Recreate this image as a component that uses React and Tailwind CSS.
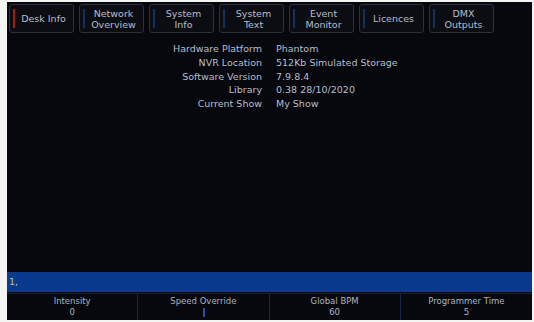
import React from 'react';

const tabs = [
  { label: ['Desk Info'], active: true },
  { label: ['Network', 'Overview'] },
  { label: ['System', 'Info'] },
  { label: ['System', 'Text'] },
  { label: ['Event', 'Monitor'] },
  { label: ['Licences'] },
  { label: ['DMX', 'Outputs'] },
];

const info = [
  ['Hardware Platform', 'Phantom'],
  ['NVR Location', '512Kb Simulated Storage'],
  ['Software Version', '7.9.8.4'],
  ['Library', '0.38 28/10/2020'],
  ['Current Show', 'My Show'],
];

const wheels = [
  { name: 'Intensity', value: '0' },
  { name: 'Speed Override', value: '', bar: true },
  { name: 'Global BPM', value: '60' },
  { name: 'Programmer Time', value: '5' },
];

const Tab = ({ label, active }) => (
  <div className="relative w-[65px] h-[29px] rounded-[3px] border border-[#2e3039] bg-[#0c0c13] flex items-center justify-center">
    <span className={`absolute left-[3px] top-[4px] bottom-[4px] w-[2px] ${active ? 'bg-[#b3161a]' : 'bg-[#13305f]'}`} />
    <div className="text-center text-[9.5px] leading-[11px] text-[#b3bfcb] pl-[4px]">
      {label.map((l) => (
        <div key={l}>{l}</div>
      ))}
    </div>
  </div>
);

export default function App() {
  return (
    <div
      className="w-[534px] h-[322px] bg-[#f4f4f2] pl-[7px] pr-[2px] pt-[2px] pb-[2px]"
      style={{ fontFamily: '"DejaVu Sans", Verdana, sans-serif' }}
    >
      <div className="w-full h-full bg-[#07070e] flex flex-col">
        {/* Tabs */}
        <div className="flex gap-[5px] pl-[2px] pt-[2px]">
          {tabs.map((t) => (
            <Tab key={t.label.join(' ')} {...t} />
          ))}
        </div>

        {/* Desk info */}
        <div className="flex-1 pt-[9px]">
          <div className="grid grid-cols-[255px_auto] gap-x-[14px] text-[9.5px] leading-[13.75px] text-[#b5bfca]">
            {info.map(([k, v]) => (
              <React.Fragment key={k}>
                <div className="text-right">{k}</div>
                <div>{v}</div>
              </React.Fragment>
            ))}
          </div>
        </div>

        {/* Command line */}
        <div className="h-[20px] bg-[#0a3a8e] flex items-center px-[2px] text-[9.5px] text-[#c9c27a]">
          1,
        </div>

        {/* Wheels */}
        <div className="h-[27px] mt-[1px] grid grid-cols-4 border-t border-[#0f1f3d]">
          {wheels.map((w, i) => (
            <div
              key={w.name}
              className={`relative flex flex-col items-center pt-[2px] text-[8.5px] leading-[11px] text-[#aab6c2] ${i < 3 ? 'border-r border-[#15284a]' : ''}`}
            >
              <div>{w.name}</div>
              <div>{w.value}</div>
              {w.bar && (
                <span className="absolute left-1/2 bottom-[3px] h-[9px] w-[2px] bg-[#2156a6]" />
              )}
            </div>
          ))}
        </div>
      </div>
    </div>
  );
}
